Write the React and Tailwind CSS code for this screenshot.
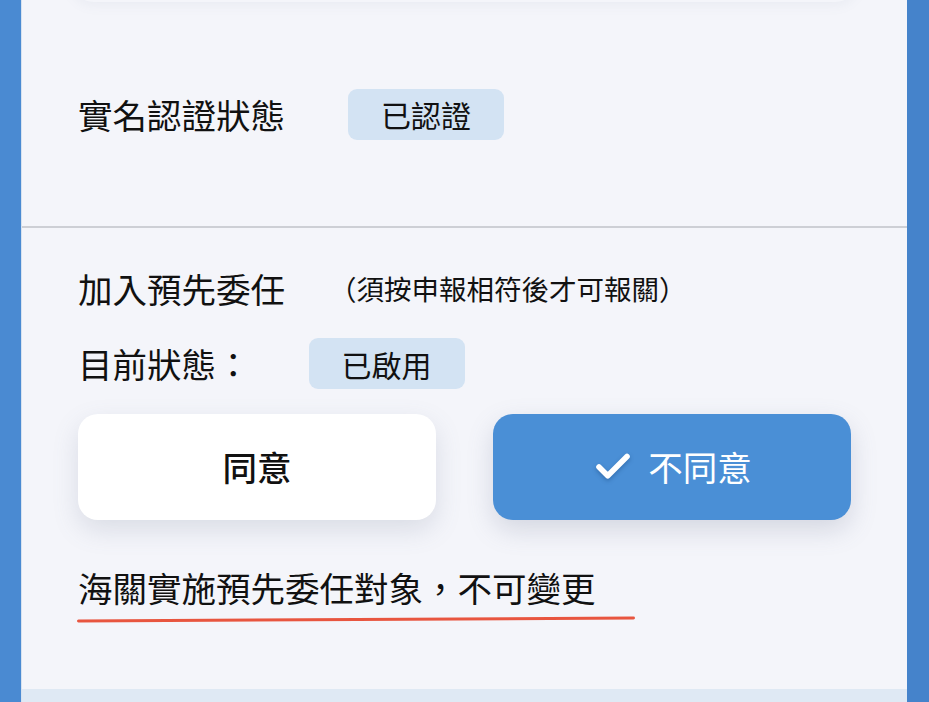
import React from "react";

const font = { fontFamily: '"Noto Sans CJK TC", "Noto Sans", sans-serif' };

function Badge({ children }) {
  return (
    <div className="h-[51px] px-[33px] rounded-[9px] bg-[#d3e3f3] flex items-center justify-center text-[30px] text-[#111] leading-none">
      {children}
    </div>
  );
}

export default function App() {
  return (
    <div className="w-full h-[702px] flex bg-[#4a88d0] overflow-hidden" style={font}>
      <div className="w-[21px] shrink-0 bg-[#4a8ad2]" />
      <div className="flex-1 bg-[#f4f5fa] flex flex-col overflow-hidden border-l border-[#d7e2ef]">
        {/* card above (only its shadow visible) */}
        <div className="h-[40px] -mt-[38px] mx-[48px] rounded-b-[24px] bg-[#f4f5fa] shadow-[0_4px_12px_rgba(120,130,150,0.07)] shrink-0" />
        <div className="h-[224px] flex items-center px-[56px] shrink-0">
          <div className="text-[34.5px] text-[#111] leading-none">實名認證狀態</div>
          <div className="ml-[63px]">
            <Badge>已認證</Badge>
          </div>
        </div>
        <div className="h-[2px] bg-[#cdcfd5] shrink-0" />
        <div className="px-[56px] pt-[35px] flex flex-col shrink-0">
          <div className="h-[51px] flex items-center">
            <div className="text-[34.5px] text-[#111] leading-none">加入預先委任</div>
            <div className="ml-[44px] text-[27.5px] text-[#111] leading-none">（須按申報相符後才可報關）</div>
          </div>
          <div className="h-[51px] mt-[24px] flex items-center">
            <div className="text-[34.5px] text-[#111] leading-none">目前狀態：</div>
            <div className="ml-[58px]">
              <Badge>已啟用</Badge>
            </div>
          </div>
          <div className="mt-[25px] grid grid-cols-2 gap-[57px]">
            <button className="h-[106px] rounded-[20px] bg-white shadow-[0_10px_26px_rgba(100,110,140,0.18)] flex items-center justify-center text-[34.5px] font-medium text-[#111]">
              同意
            </button>
            <button className="h-[106px] rounded-[20px] bg-[#4a8fd6] shadow-[0_10px_26px_rgba(100,110,140,0.22)] flex items-center justify-center gap-[14px] text-[34.5px] text-white">
              <svg width="42" height="42" viewBox="0 0 24 24" fill="none" stroke="white" strokeWidth="3.2" strokeLinecap="round" strokeLinejoin="round" className="drop-shadow-[0_2px_2px_rgba(0,40,90,0.3)]">
                <path d="M20 6 9 17l-5-5" />
              </svg>
              <span>不同意</span>
            </button>
          </div>
          <div className="mt-[46px] text-[34.5px] text-[#111] leading-[42px]">海關實施預先委任對象，不可變更</div>
          <div className="mt-[10px] h-[3px] w-[558px] -ml-[1px] rounded-full bg-[#e8553f] -rotate-[0.3deg]" />
        </div>
        <div className="flex-1" />
        <div className="h-[13px] bg-[#dfe9f4] shrink-0" />
      </div>
      <div className="w-[22px] shrink-0 bg-[#4583cb]" />
    </div>
  );
}
